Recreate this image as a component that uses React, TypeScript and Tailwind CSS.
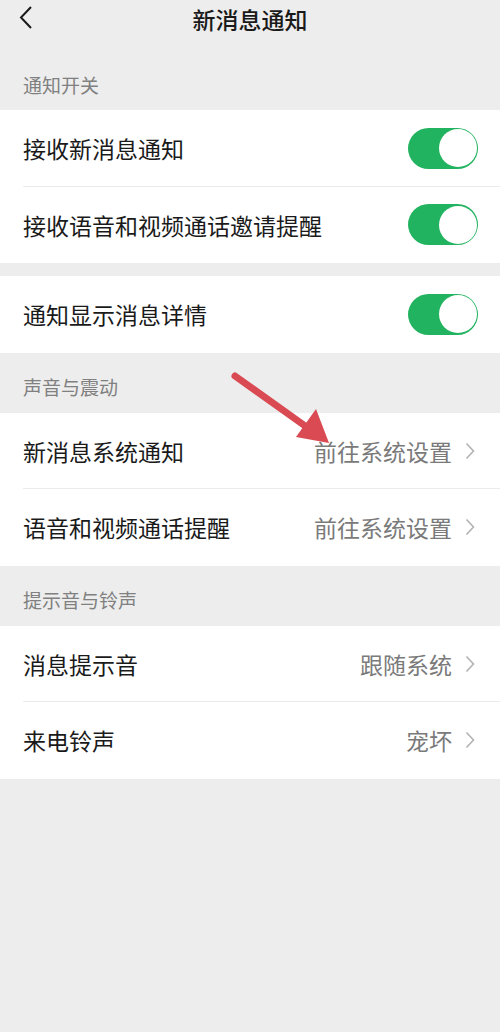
import React from "react";

const font = { fontFamily: '"Noto Sans CJK SC", "Noto Sans", sans-serif' };

function Toggle() {
  return (
    <div className="w-[70px] h-[41px] rounded-full bg-[#21b35f] flex items-center justify-end pr-[1.5px]">
      <div className="w-[38px] h-[38px] rounded-full bg-white" />
    </div>
  );
}

function Chevron() {
  return (
    <svg width="10" height="18" viewBox="0 0 10 18" className="ml-[13px]">
      <path d="M1.5 1.5 L8.5 9 L1.5 16.5" fill="none" stroke="#b2b2b2" strokeWidth="1.6" />
    </svg>
  );
}

function Row({ label, value, toggle, divider }: { label: string; value?: string; toggle?: boolean; divider?: boolean }) {
  return (
    <div className="relative h-[76.5px] flex items-center pl-[23px] pr-[22px]">
      <span className="flex-1 text-[23px] text-[#1a1a1a]">{label}</span>
      {toggle ? (
        <Toggle />
      ) : (
        <div className="flex items-center pr-[3px]">
          <span className="text-[23px] text-[#7a7a7a]">{value}</span>
          <Chevron />
        </div>
      )}
      {divider && <div className="absolute bottom-0 left-[23px] right-0 h-px bg-[#ececec]" />}
    </div>
  );
}

function Label({ text }: { text: string }) {
  return (
    <div className="h-[60px] flex items-end pl-[23px] pb-[11px]">
      <span className="text-[19px] text-[#808080]">{text}</span>
    </div>
  );
}

export default function App() {
  return (
    <div className="relative w-[500px] min-h-[1032px] bg-[#ededed]" style={font}>
      <header className="h-[50px] flex items-start justify-center relative">
        <svg width="16" height="26" viewBox="0 0 16 26" className="absolute left-[18px] top-[5px]">
          <path d="M13 2 L3 12.5 L13 23" fill="none" stroke="#1a1a1a" strokeWidth="2" />
        </svg>
        <h1 className="text-[23px] font-medium text-[#1a1a1a] leading-[38px]">新消息通知</h1>
      </header>
      <Label text="通知开关" />
      <div className="bg-white">
        <Row label="接收新消息通知" toggle divider />
        <Row label="接收语音和视频通话邀请提醒" toggle />
      </div>
      <div className="h-[13px]" />
      <div className="bg-white">
        <Row label="通知显示消息详情" toggle />
      </div>
      <Label text="声音与震动" />
      <div className="bg-white">
        <Row label="新消息系统通知" value="前往系统设置" divider />
        <Row label="语音和视频通话提醒" value="前往系统设置" />
      </div>
      <Label text="提示音与铃声" />
      <div className="bg-white">
        <Row label="消息提示音" value="跟随系统" divider />
        <Row label="来电铃声" value="宠坏" />
      </div>
      <svg width="500" height="1032" className="absolute inset-0 pointer-events-none">
        <line x1="235" y1="376" x2="308" y2="428" stroke="#d94a52" strokeWidth="7" strokeLinecap="round" />
        <polygon points="329,443 296,437 316,409" fill="#d94a52" />
      </svg>
    </div>
  );
}
